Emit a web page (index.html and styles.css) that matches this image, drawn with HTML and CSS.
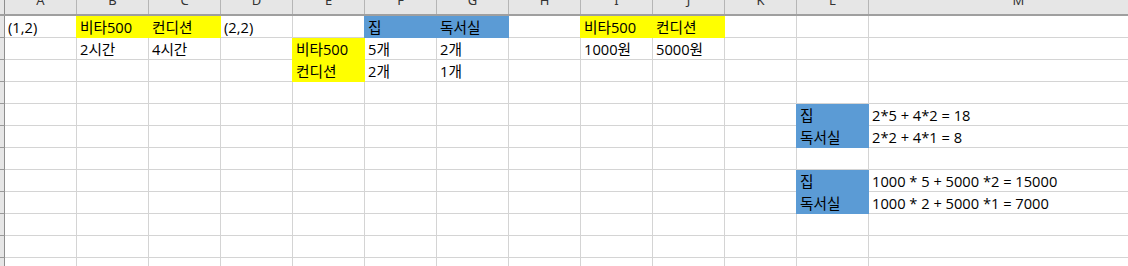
FILE: index.html
```html
<!DOCTYPE html>
<html lang="ko">
<head>
<meta charset="utf-8">
<title>Sheet1</title>
<link rel="stylesheet" href="styles.css">
</head>
<body>
<div class="sheet">
  <div class="row head">
    <div class="rh"></div>
    <div class="ch"><span>A</span></div><div class="ch"><span>B</span></div><div class="ch"><span>C</span></div>
    <div class="ch"><span>D</span></div><div class="ch"><span>E</span></div><div class="ch"><span>F</span></div>
    <div class="ch"><span>G</span></div><div class="ch"><span>H</span></div><div class="ch"><span>I</span></div>
    <div class="ch"><span>J</span></div><div class="ch"><span>K</span></div><div class="ch"><span>L</span></div>
    <div class="ch"><span>M</span></div>
  </div>

  <div class="row">
    <div class="rh"></div>
    <div class="c">(1,2)</div><div class="c y">비타500</div><div class="c y">컨디션</div>
    <div class="c">(2,2)</div><div class="c"></div><div class="c b">집</div>
    <div class="c b">독서실</div><div class="c"></div><div class="c y">비타500</div>
    <div class="c y">컨디션</div><div class="c"></div><div class="c"></div><div class="c"></div>
  </div>

  <div class="row">
    <div class="rh"></div>
    <div class="c"></div><div class="c">2시간</div><div class="c">4시간</div>
    <div class="c"></div><div class="c y">비타500</div><div class="c">5개</div>
    <div class="c">2개</div><div class="c"></div><div class="c">1000원</div>
    <div class="c">5000원</div><div class="c"></div><div class="c"></div><div class="c"></div>
  </div>

  <div class="row">
    <div class="rh"></div>
    <div class="c"></div><div class="c"></div><div class="c"></div>
    <div class="c"></div><div class="c y">컨디션</div><div class="c">2개</div>
    <div class="c">1개</div><div class="c"></div><div class="c"></div>
    <div class="c"></div><div class="c"></div><div class="c"></div><div class="c"></div>
  </div>

  <div class="row">
    <div class="rh"></div>
    <div class="c"></div><div class="c"></div><div class="c"></div><div class="c"></div>
    <div class="c"></div><div class="c"></div><div class="c"></div><div class="c"></div>
    <div class="c"></div><div class="c"></div><div class="c"></div><div class="c"></div><div class="c"></div>
  </div>

  <div class="row">
    <div class="rh"></div>
    <div class="c"></div><div class="c"></div><div class="c"></div><div class="c"></div>
    <div class="c"></div><div class="c"></div><div class="c"></div><div class="c"></div>
    <div class="c"></div><div class="c"></div><div class="c"></div>
    <div class="c b">집</div><div class="c">2*5 + 4*2 = 18</div>
  </div>

  <div class="row">
    <div class="rh"></div>
    <div class="c"></div><div class="c"></div><div class="c"></div><div class="c"></div>
    <div class="c"></div><div class="c"></div><div class="c"></div><div class="c"></div>
    <div class="c"></div><div class="c"></div><div class="c"></div>
    <div class="c b">독서실</div><div class="c">2*2 + 4*1 = 8</div>
  </div>

  <div class="row">
    <div class="rh"></div>
    <div class="c"></div><div class="c"></div><div class="c"></div><div class="c"></div>
    <div class="c"></div><div class="c"></div><div class="c"></div><div class="c"></div>
    <div class="c"></div><div class="c"></div><div class="c"></div><div class="c"></div><div class="c"></div>
  </div>

  <div class="row">
    <div class="rh"></div>
    <div class="c"></div><div class="c"></div><div class="c"></div><div class="c"></div>
    <div class="c"></div><div class="c"></div><div class="c"></div><div class="c"></div>
    <div class="c"></div><div class="c"></div><div class="c"></div>
    <div class="c b">집</div><div class="c">1000 * 5 + 5000 *2 = 15000</div>
  </div>

  <div class="row">
    <div class="rh"></div>
    <div class="c"></div><div class="c"></div><div class="c"></div><div class="c"></div>
    <div class="c"></div><div class="c"></div><div class="c"></div><div class="c"></div>
    <div class="c"></div><div class="c"></div><div class="c"></div>
    <div class="c b">독서실</div><div class="c">1000 * 2 + 5000 *1 = 7000</div>
  </div>

  <div class="row">
    <div class="rh"></div>
    <div class="c"></div><div class="c"></div><div class="c"></div><div class="c"></div>
    <div class="c"></div><div class="c"></div><div class="c"></div><div class="c"></div>
    <div class="c"></div><div class="c"></div><div class="c"></div><div class="c"></div><div class="c"></div>
  </div>

  <div class="row">
    <div class="rh"></div>
    <div class="c"></div><div class="c"></div><div class="c"></div><div class="c"></div>
    <div class="c"></div><div class="c"></div><div class="c"></div><div class="c"></div>
    <div class="c"></div><div class="c"></div><div class="c"></div><div class="c"></div><div class="c"></div>
  </div>

  <div class="row">
    <div class="rh"></div>
    <div class="c"></div><div class="c"></div><div class="c"></div><div class="c"></div>
    <div class="c"></div><div class="c"></div><div class="c"></div><div class="c"></div>
    <div class="c"></div><div class="c"></div><div class="c"></div><div class="c"></div><div class="c"></div>
  </div>
</div>
</body>
</html>
```

FILE: styles.css
```css
* {
  box-sizing: border-box;
}

html,
body {
  margin: 0;
  padding: 0;
  background: #ffffff;
  overflow: hidden;
}

.sheet {
  width: 1128px;
  height: 266px;
  overflow: hidden;
  font-family: "Open Sans", "Noto Sans CJK KR", sans-serif;
  font-size: 14.67px;
  color: #000000;
}

.row {
  display: grid;
  grid-template-columns: 5px repeat(12, 72px) 300px;
  height: 22px;
}

/* column letters strip */
.row.head {
  height: 16px;
  background: #e6e6e6;
  border-bottom: 2px solid #9f9f9f;
}

.ch {
  border-right: 1px solid #b5b5b5;
  display: flex;
  justify-content: center;
  overflow: hidden;
  font-family: "Noto Sans", sans-serif;
  font-size: 13px;
  color: #333333;
  line-height: 13px;
}

.ch span {
  margin-top: -6px;
}

/* row number strip (mostly scrolled away) */
.rh {
  background: #e6e6e6;
  border-right: 1px solid #8e8e8e;
  border-bottom: 1px solid #9a9a9a;
}

.head .rh {
  border-bottom: none;
}

.c {
  border-right: 1px solid #d4d4d4;
  border-bottom: 1px solid #d4d4d4;
  padding: 0 0 0 3px;
  line-height: 20px;
  padding-top: 1px;
  white-space: nowrap;
  overflow: visible;
}

.c.y {
  background: #ffff00;
  border-right-color: #ffff00;
  border-bottom-color: #ffff00;
  box-shadow: -1px 0 0 0 #ffff00;
}

.c.b {
  background: #5b9bd5;
  border-right-color: #5b9bd5;
  border-bottom-color: #5b9bd5;
  box-shadow: -1px 0 0 0 #5b9bd5;
}
```
